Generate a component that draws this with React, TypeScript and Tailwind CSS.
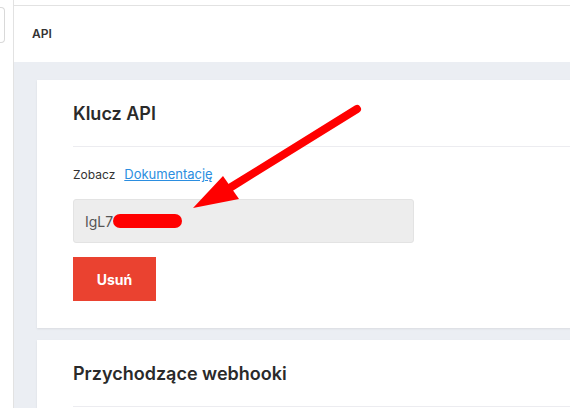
export default function App() {
  return (
    <div
      className="relative flex h-[408px] w-[570px] overflow-hidden bg-white text-[#2d2d2d]"
      style={{ fontFamily: 'Inter, "Liberation Sans", sans-serif' }}
    >
      {/* sidebar edge */}
      <div className="w-[14px] shrink-0 border-r border-[#e2e2e2] pt-[7px]">
        <div className="h-[36px] w-[5px] rounded-r-[4px] border border-l-0 border-[#d9d9d9]" />
      </div>

      <div className="flex min-w-0 flex-1 flex-col">
        <div className="mt-[5px] flex h-[57px] shrink-0 items-center border-t border-[#e2e2e2] pl-[18px]">
          <span className="text-[12px] font-semibold text-[#333]">API</span>
        </div>

        <div className="flex-1 bg-[#ebeef3] pl-[23px] pt-[18px]">
          <div className="w-[600px] bg-white pl-[36px] pb-[27px] shadow-[0_1px_2px_rgba(0,0,0,0.08)]">
            <div className="border-b border-[#ececf0] pt-[20px] pb-[18px]">
              <h2 className="text-[18px] leading-[28px] font-semibold text-[#2a2a2a]">Klucz API</h2>
            </div>
            <p className="mt-[19px] flex items-baseline gap-[9px] text-[12px] leading-[16px] text-[#333]">
              <span>Zobacz</span>
              <a className="text-[13px] text-[#2b8ee0] underline">Dokumentację</a>
            </p>
            <div className="relative mt-[16px] flex h-[44px] w-[341px] items-center rounded-[3px] border border-[#e3e3e3] bg-[#ededed] pl-[11px] text-[14px] text-[#555]">
              IgL7
              <span className="absolute left-[39px] top-[14px] h-[14px] w-[69px] rounded-full bg-[#ff0000]" />
            </div>
            <button className="mt-[14px] flex h-[44px] w-[83px] items-center justify-center bg-[#ea4230] text-[14px] font-bold text-white">
              Usuń
            </button>
          </div>

          <div className="mt-[12px] w-[600px] bg-white pl-[36px] shadow-[0_1px_2px_rgba(0,0,0,0.08)]">
            <div className="border-b border-[#ececf0] pt-[20px] pb-[18px]">
              <h2 className="text-[18px] leading-[28px] font-semibold text-[#2a2a2a]">Przychodzące webhooki</h2>
            </div>
            <div className="h-[40px]" />
          </div>
        </div>
      </div>

      {/* annotation arrow */}
      <svg className="pointer-events-none absolute left-0 top-0" width="570" height="408" viewBox="0 0 570 408">
        <line x1="357" y1="109" x2="228" y2="189" stroke="#ff0000" strokeWidth="8" strokeLinecap="round" />
        <polygon points="193,208 223,176 239,199" fill="#ff0000" />
      </svg>
    </div>
  );
}
